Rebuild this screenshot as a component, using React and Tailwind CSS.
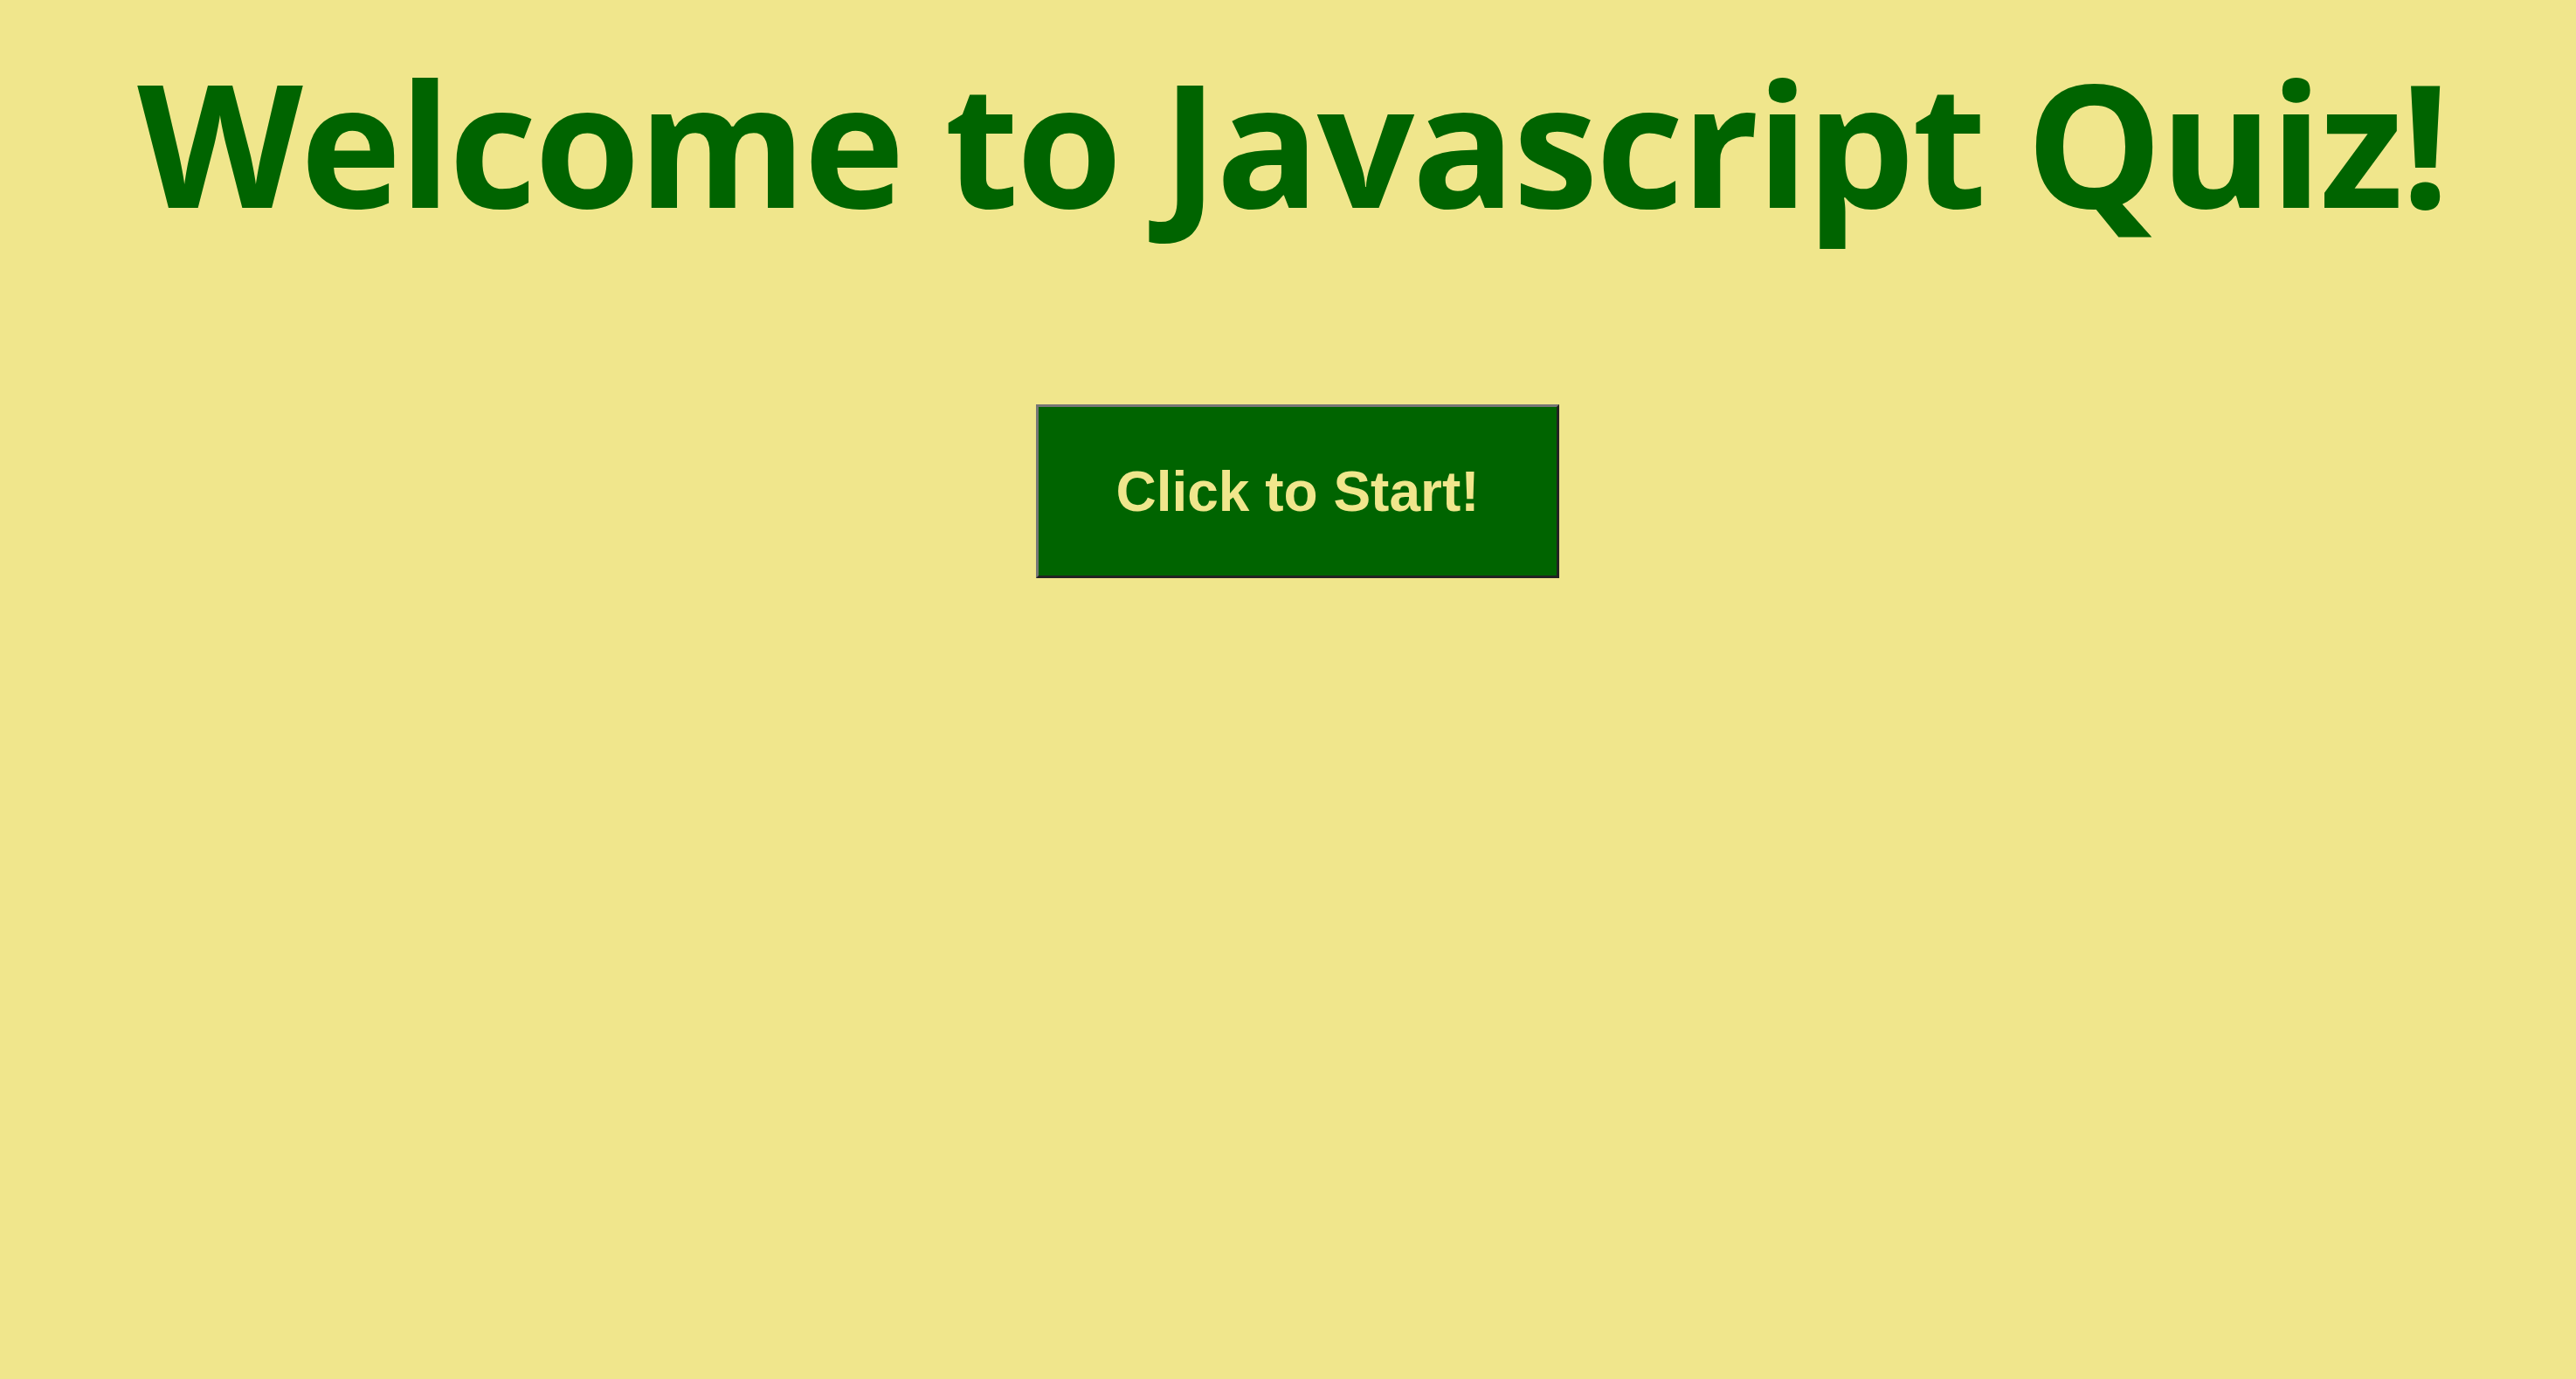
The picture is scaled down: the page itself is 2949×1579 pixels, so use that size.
export default function App() {
  return (
    <div className="min-h-screen w-full bg-[#f0e68c] flex flex-col items-center">
      <h1 className="mt-[64px] ml-[10px] text-[196px] leading-none font-bold tracking-[-2.8px] text-[#006400] whitespace-nowrap font-['Open_Sans','Noto_Sans',sans-serif]">
        Welcome to Javascript Quiz!
      </h1>
      <button className="mt-[203px] ml-[22px] w-[599px] h-[199px] bg-[#006400] text-[#f0e68c] text-[64px] font-bold border-[3px] border-solid border-t-[#767676] border-l-[#767676] border-r-[#222222] border-b-[#222222] flex items-center justify-center font-['Liberation_Sans',Arial,sans-serif]">
        Click to Start!
      </button>
    </div>
  );
}
